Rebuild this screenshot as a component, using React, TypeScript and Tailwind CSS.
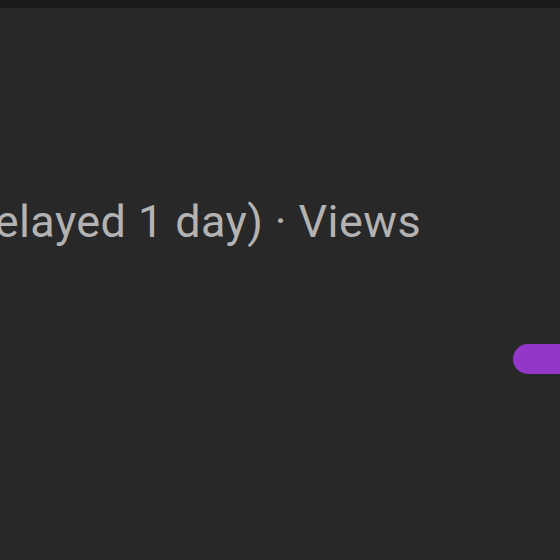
import React from 'react';

export default function App() {
  return (
    <div className="w-[560px] h-[560px] overflow-hidden bg-[#282828] flex flex-col font-['Roboto',sans-serif]">
      <div className="h-2 bg-[#1b1b1b] shrink-0" />
      <div className="mt-[192px] flex whitespace-nowrap">
        <p className="-ml-[51px] text-[45px] leading-[44px] text-[#b3b3b3] tracking-[0.4px]">
          (Delayed 1 day) · Views
        </p>
      </div>
      <div className="mt-[100px] flex justify-end">
        <div className="w-[47px] h-[30px] rounded-l-full bg-[#9436c9]" />
      </div>
    </div>
  );
}
